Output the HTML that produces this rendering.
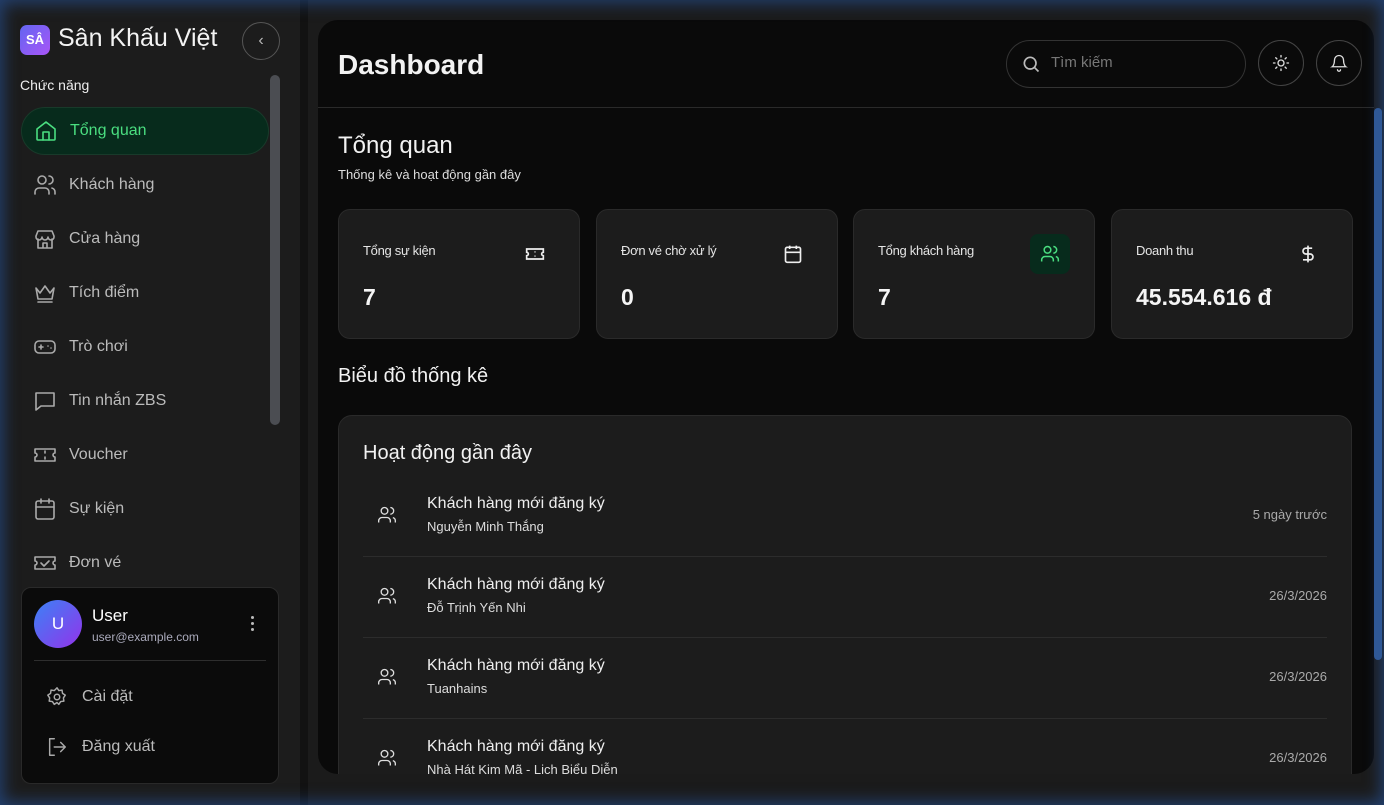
<!DOCTYPE html>
<html><head><meta charset="utf-8"><style>
*{box-sizing:border-box;margin:0;padding:0}
body{width:1384px;height:805px;overflow:hidden;background:#1b1b1b;font-family:"Liberation Sans","DejaVu Sans",sans-serif;color:#fff;position:relative}
.glow{position:absolute;inset:0;pointer-events:none;box-shadow:inset 0 0 16px 3px rgba(40,90,170,.6);z-index:10}
.side{position:absolute;left:0;top:0;width:300px;height:805px;background:#1c1c1c}
.strip{position:absolute;left:300px;top:0;width:8px;height:805px;background:#121212}
.logo{position:absolute;left:20px;top:25px;width:30px;height:30px;border-radius:7px;background:linear-gradient(135deg,#6366f1,#a855f7);font-size:13px;font-weight:bold;text-align:center;line-height:30px}
.brand{position:absolute;left:58px;top:24px;font-size:25px;color:#f3f3f3}
.coll{position:absolute;left:242px;top:22px;width:38px;height:38px;border:1px solid #555;border-radius:50%;color:#bbb;text-align:center;line-height:36px;font-size:16px}
.lab{position:absolute;left:20px;top:77px;font-size:14px;color:#eee}
.sb{position:absolute;left:270px;top:75px;width:10px;height:350px;background:#4b4d52;border-radius:5px}
.nav{position:absolute;left:21px;width:248px;height:48px;display:flex;align-items:center;padding-left:12px;font-size:16px;color:#bbb}
.nav svg{width:24px;height:24px;margin-right:12px;fill:none;stroke:#aaa;stroke-width:1.6;stroke-linecap:round;stroke-linejoin:round}
.nav.on{background:#072b1c;border:1px solid #183a2a;border-radius:24px;color:#4ade80}
.nav.on svg{stroke:#4ade80}
.user{position:absolute;left:21px;top:587px;width:258px;height:197px;background:#0b0b0b;border:1px solid #2a2a2a;border-radius:10px}
.av{position:absolute;left:12px;top:12px;width:48px;height:48px;border-radius:50%;background:linear-gradient(135deg,#3b82f6,#9333ea);text-align:center;line-height:48px;font-size:17px}
.un{position:absolute;left:70px;top:18px;font-size:17px}
.ue{position:absolute;left:70px;top:42px;font-size:12px;color:#aab}
.dots{position:absolute;left:229px;top:28px;width:4px}
.dots i{display:block;width:3px;height:3px;background:#bbb;border-radius:50%;margin-bottom:3px}
.sep{position:absolute;left:12px;right:12px;top:72px;border-top:1px solid #2e2e2e}
.um{position:absolute;left:24px;display:flex;align-items:center;font-size:16px;color:#bbb}
.um svg{width:22px;height:22px;margin-right:14px;fill:none;stroke:#aaa;stroke-width:1.6;stroke-linecap:round;stroke-linejoin:round}
.main{position:absolute;left:318px;top:20px;width:1056px;height:754px;background:#0a0a0a;border-radius:20px;overflow:hidden}
.hdr{position:absolute;left:0;top:0;right:0;height:88px;border-bottom:1px solid #2a2a2a}
.h1{position:absolute;left:20px;top:29px;font-size:28px;font-weight:bold;color:#f2f2f2}
.search{position:absolute;left:688px;top:20px;width:240px;height:48px;border:1px solid #333;border-radius:24px;font-size:15px;color:#777;padding:13px 0 0 44px}
.search svg{position:absolute;left:14px;top:13px}
.rb{position:absolute;top:20px;width:46px;height:46px;border:1px solid #444;border-radius:50%}
.rb svg{position:absolute;left:13px;top:13px}
.t2{position:absolute;left:20px;top:112px;font-size:24px;color:#f2f2f2}
.st{position:absolute;left:20px;top:147px;font-size:13px;color:#ddd}
.card{position:absolute;top:189px;width:242px;height:130px;background:#1c1c1c;border:1px solid #2a2a2a;border-radius:12px}
.cl{position:absolute;left:24px;top:33px;font-size:13px;color:#e5e5e5;letter-spacing:-.3px}
.cv{position:absolute;left:24px;top:74px;font-size:23px;font-weight:bold;color:#f5f5f5}
.ci{position:absolute;left:176px;top:24px;width:40px;height:40px;border-radius:8px}
.ci svg{position:absolute;left:10px;top:10px}
.t3{position:absolute;left:20px;top:345px;font-size:20px;color:#f2f2f2}
.actv{position:absolute;left:20px;top:395px;width:1014px;height:400px;background:#1c1c1c;border:1px solid #2a2a2a;border-radius:14px}
.at{position:absolute;left:24px;top:26px;font-size:20px;color:#f2f2f2}
.row{position:absolute;left:24px;width:964px;height:81px;border-bottom:1px solid #2c2c2c}
.row svg{position:absolute;left:14px;top:29px}
.r1{position:absolute;left:64px;top:19px;font-size:16px;color:#eee}
.r2{position:absolute;left:64px;top:43px;font-size:13px;color:#ddd}
.r3{position:absolute;right:0;top:31px;font-size:13px;color:#aaa}
.msb{position:absolute;left:1374px;top:108px;width:8px;height:552px;background:#2f5896;border-radius:4px;z-index:11}
</style></head><body>
<div class="side">
<div class="logo">SÂ</div><div class="brand">Sân Khấu Việt</div><div class="coll">‹</div>
<div class="lab">Chức năng</div><div class="sb"></div>
<div class="nav on" style="top:107px"><svg viewBox="0 0 24 24"><path d="M3 10l9-7 9 7v10a1 1 0 0 1-1 1H4a1 1 0 0 1-1-1z"/><path d="M9 21v-8h6v8"/></svg>Tổng quan</div>
<div class="nav" style="top:161px"><svg viewBox="0 0 24 24"><circle cx="9" cy="7" r="4"/><path d="M2 21v-2a4 4 0 0 1 4-4h6a4 4 0 0 1 4 4v2M16 3a4 4 0 0 1 0 8M22 21v-2a4 4 0 0 0-3-3.9"/></svg>Khách hàng</div>
<div class="nav" style="top:215px"><svg viewBox="0 0 24 24"><path d="M3 9l2-5h14l2 5v1a3 3 0 0 1-6 0 3 3 0 0 1-6 0 3 3 0 0 1-6 0z"/><path d="M5 12v9h14v-9M10 21v-5h4v5"/></svg>Cửa hàng</div>
<div class="nav" style="top:269px"><svg viewBox="0 0 24 24"><path d="M3 7l4 5 5-7 5 7 4-5-2 11H5zM5 21h14"/></svg>Tích điểm</div>
<div class="nav" style="top:323px"><svg viewBox="0 0 24 24"><rect x="2" y="6" width="20" height="12" rx="4"/><path d="M6 12h4M8 10v4M15 11h.01M18 13h.01"/></svg>Trò chơi</div>
<div class="nav" style="top:377px"><svg viewBox="0 0 24 24"><path d="M3 4h18v13H8l-5 4z"/></svg>Tin nhắn ZBS</div>
<div class="nav" style="top:431px"><svg viewBox="0 0 24 24"><path d="M2 6h20v4a2 2 0 0 0 0 4v4H2v-4a2 2 0 0 0 0-4zM12 8v2M12 14v2"/></svg>Voucher</div>
<div class="nav" style="top:485px"><svg viewBox="0 0 24 24"><rect x="3" y="4" width="18" height="18" rx="2"/><path d="M16 2v4M8 2v4M3 10h18"/></svg>Sự kiện</div>
<div class="nav" style="top:539px"><svg viewBox="0 0 24 24"><path d="M2 6h20v4a2 2 0 0 0 0 4v4H2v-4a2 2 0 0 0 0-4z"/><path d="M8 12l3 3 5-5"/></svg>Đơn vé</div>
<div class="user"><div class="av">U</div><div class="un">User</div><div class="ue">user@example.com</div><div class="dots"><i></i><i></i><i></i></div><div class="sep"></div>
<div class="um" style="top:98px"><svg viewBox="0 0 24 24"><circle cx="12" cy="12" r="3"/><path d="M12 2l2 3 3.5-.5.5 3.5 3 2-2 3 .5 3.5-3.5.5-2 3-2-2-3 2-2-3-3.5-.5.5-3.5-2-3 3-2 .5-3.5 3.5.5z"/></svg>Cài đặt</div>
<div class="um" style="top:148px"><svg viewBox="0 0 24 24"><path d="M9 21H4V3h5M16 17l5-5-5-5M21 12H9"/></svg>Đăng xuất</div></div>
</div>
<div class="strip"></div>
<div class="main">
<div class="hdr"><div class="h1">Dashboard</div>
<div class="search"><svg width="20" height="20" viewBox="0 0 24 24" fill="none" stroke="#bbb" stroke-width="2"><circle cx="11" cy="11" r="7"/><path d="M21 21l-5-5"/></svg>Tìm kiếm</div>
<div class="rb" style="left:940px"><svg width="18" height="18" viewBox="0 0 24 24" fill="none" stroke="#ddd" stroke-width="1.8" stroke-linecap="round"><circle cx="12" cy="12" r="4"/><path d="M12 2v2M12 20v2M2 12h2M20 12h2M5 5l1.5 1.5M17.5 17.5L19 19M5 19l1.5-1.5M17.5 6.5L19 5"/></svg></div>
<div class="rb" style="left:998px"><svg width="18" height="18" viewBox="0 0 24 24" fill="none" stroke="#ddd" stroke-width="1.8" stroke-linecap="round"><path d="M6 8a6 6 0 0 1 12 0c0 7 3 9 3 9H3s3-2 3-9M10 21a2 2 0 0 0 4 0"/></svg></div>
</div>
<div class="t2">Tổng quan</div><div class="st">Thống kê và hoạt động gần đây</div>
<div class="card" style="left:20px"><div class="cl">Tổng sự kiện</div><div class="cv">7</div><div class="ci"><svg width="20" height="20" viewBox="0 0 24 24" fill="none" stroke="#eee" stroke-width="2"><path d="M2 6h20v4a2 2 0 0 0 0 4v4H2v-4a2 2 0 0 0 0-4zM12 9v1M12 14v1"/></svg></div></div>
<div class="card" style="left:278px"><div class="cl">Đơn vé chờ xử lý</div><div class="cv">0</div><div class="ci"><svg width="20" height="20" viewBox="0 0 24 24" fill="none" stroke="#eee" stroke-width="2"><rect x="3" y="4" width="18" height="18" rx="2"/><path d="M16 2v4M8 2v4M3 10h18M8 14h.01M12 14h.01M16 14h.01M8 18h.01M12 18h.01M16 18h.01"/></svg></div></div>
<div class="card" style="left:535px"><div class="cl">Tổng khách hàng</div><div class="cv">7</div><div class="ci" style="background:#072b1c"><svg width="20" height="20" viewBox="0 0 24 24" fill="none" stroke="#4ade80" stroke-width="1.8"><circle cx="9" cy="7" r="4"/><path d="M2 21v-2a4 4 0 0 1 4-4h6a4 4 0 0 1 4 4v2M16 3a4 4 0 0 1 0 8M22 21v-2a4 4 0 0 0-3-3.9"/></svg></div></div>
<div class="card" style="left:793px"><div class="cl">Doanh thu</div><div class="cv">45.554.616 đ</div><div class="ci"><svg width="20" height="20" viewBox="0 0 24 24" fill="none" stroke="#eee" stroke-width="2"><path d="M12 2v20M17 5H9.5a3.5 3.5 0 0 0 0 7h5a3.5 3.5 0 0 1 0 7H6"/></svg></div></div>
<div class="t3">Biểu đồ thống kê</div>
<div class="actv"><div class="at">Hoạt động gần đây</div>
<div class="row" style="top:60px"><svg width="20" height="20" viewBox="0 0 24 24" fill="none" stroke="#ddd" stroke-width="1.6"><circle cx="9" cy="7" r="4"/><path d="M2 21v-2a4 4 0 0 1 4-4h6a4 4 0 0 1 4 4v2M16 3a4 4 0 0 1 0 8M22 21v-2a4 4 0 0 0-3-3.9"/></svg><div class="r1">Khách hàng mới đăng ký</div><div class="r2">Nguyễn Minh Thắng</div><div class="r3">5 ngày trước</div></div>
<div class="row" style="top:141px"><svg width="20" height="20" viewBox="0 0 24 24" fill="none" stroke="#ddd" stroke-width="1.6"><circle cx="9" cy="7" r="4"/><path d="M2 21v-2a4 4 0 0 1 4-4h6a4 4 0 0 1 4 4v2M16 3a4 4 0 0 1 0 8M22 21v-2a4 4 0 0 0-3-3.9"/></svg><div class="r1">Khách hàng mới đăng ký</div><div class="r2">Đỗ Trịnh Yến Nhi</div><div class="r3">26/3/2026</div></div>
<div class="row" style="top:222px"><svg width="20" height="20" viewBox="0 0 24 24" fill="none" stroke="#ddd" stroke-width="1.6"><circle cx="9" cy="7" r="4"/><path d="M2 21v-2a4 4 0 0 1 4-4h6a4 4 0 0 1 4 4v2M16 3a4 4 0 0 1 0 8M22 21v-2a4 4 0 0 0-3-3.9"/></svg><div class="r1">Khách hàng mới đăng ký</div><div class="r2">Tuanhains</div><div class="r3">26/3/2026</div></div>
<div class="row" style="top:303px;border:0"><svg width="20" height="20" viewBox="0 0 24 24" fill="none" stroke="#ddd" stroke-width="1.6"><circle cx="9" cy="7" r="4"/><path d="M2 21v-2a4 4 0 0 1 4-4h6a4 4 0 0 1 4 4v2M16 3a4 4 0 0 1 0 8M22 21v-2a4 4 0 0 0-3-3.9"/></svg><div class="r1">Khách hàng mới đăng ký</div><div class="r2">Nhà Hát Kim Mã - Lịch Biểu Diễn</div><div class="r3">26/3/2026</div></div>
</div>
</div>
<div class="msb"></div>
<div class="glow"></div>
</body></html>
